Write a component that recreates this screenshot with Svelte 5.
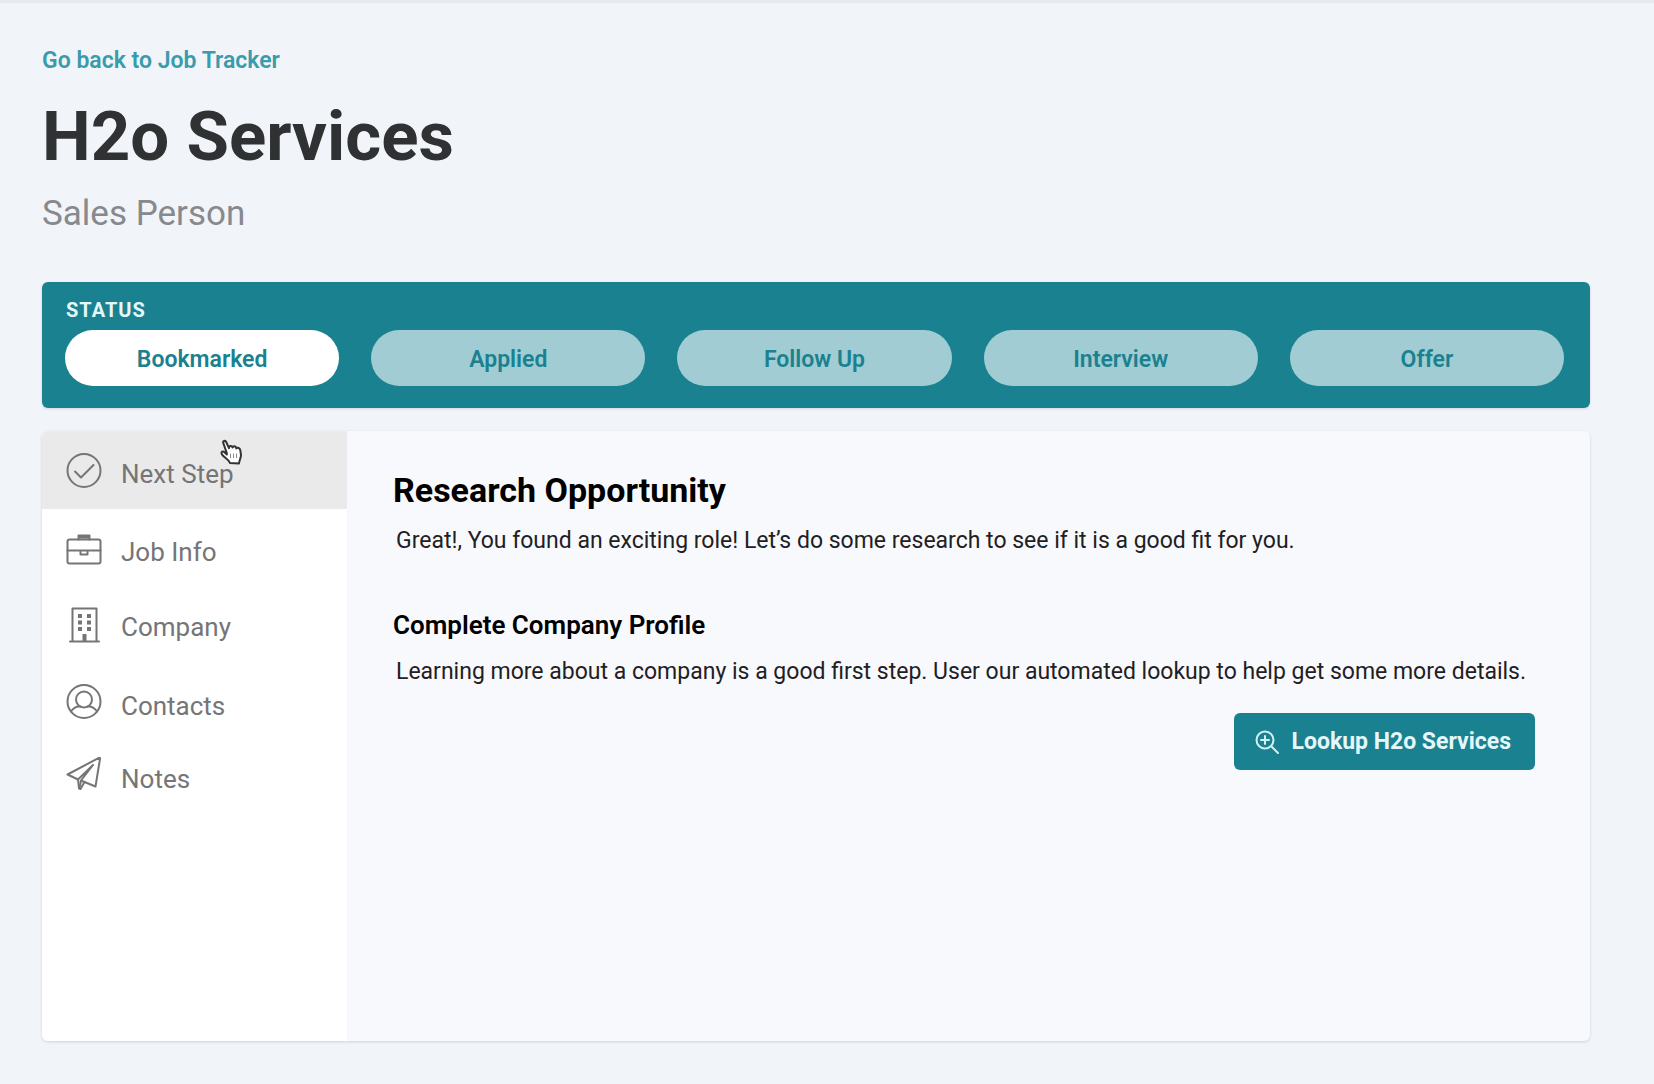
<script>
  const steps = ['Bookmarked', 'Applied', 'Follow Up', 'Interview', 'Offer'];
  const sections = [
    { id: 'next', label: 'Next Step' },
    { id: 'job', label: 'Job Info' },
    { id: 'company', label: 'Company' },
    { id: 'contacts', label: 'Contacts' },
    { id: 'notes', label: 'Notes' }
  ];
  let status = $state('Bookmarked');
  let section = $state('next');
</script>

<div class="page">
  <header>
    <a class="back" href="#tracker">Go back to Job Tracker</a>
    <h1>H2o Services</h1>
    <p class="role">Sales Person</p>
  </header>

  <section class="status" aria-labelledby="status-title">
    <h2 id="status-title">STATUS</h2>
    <div class="steps">
      {#each steps as step}
        <button type="button" class="step" class:current={status === step} aria-pressed={status === step} onclick={() => (status = step)}>{step}</button>
      {/each}
    </div>
  </section>

  <div class="card">
    <nav aria-label="Job sections">
      {#each sections as item}
        <button type="button" class="item" class:active={section === item.id} onclick={() => (section = item.id)}>
          <svg class="icon" viewBox="0 0 36 44" aria-hidden="true">
            {#if item.id === 'next'}
              <circle cx="18" cy="18.5" r="16.5" />
              <path d="M9 19.5l6 6 12.500-12.500" />
            {:else if item.id === 'job'}
              <rect x="1.500" y="9.5" width="33" height="24" rx="2" />
              <path d="M12.500 9.500V5.500h11v4M13 7.500h10M1.500 20.500H14.500M21.500 20.500H34.500M14.500 20.500h7v4h-7z" />
            {:else if item.id === 'company'}
              <path d="M6.500 36V3.500H30.500V36M4 36.500H33" />
              <path class="solid" d="M12 9h4v4h-4zM21 9h4v4h-4zM12 15.500h4v4h-4zM21 15.500h4v4h-4zM12 22h4v4h-4zM21 22h4v4h-4zM16.500 29h4v7h-4z" />
            {:else if item.id === 'contacts'}
              <circle cx="18" cy="17.5" r="16.500" />
              <circle cx="18" cy="15.500" r="8" />
              <path d="M5 27.500C7.500 23.500 11 22 14.500 22.500M21.500 22.500C25 22 28.500 23.500 31 27.500" />
            {:else}
              <path d="M1.500 17.500L33 .8C33.700 .5 34.200 1 34 1.800L29.500 29.500 18.500 25 14.500 32 13 31.500 12 22.500z" />
              <path d="M27 8L12 22.500M27 8L15 23.500 18.500 25M15 23.500L13.500 31" />
            {/if}
          </svg>
          <span>{item.label}</span>
        </button>
      {/each}
      <svg class="pointer" viewBox="0 0 24 26" aria-hidden="true">
        <path d="M7.800 15.500V14L4.300 4.200C3.600 2 6.300 1 7.200 3L10 9.200C10 6.500 13 6.500 13.500 8.500 14.500 6.500 17 7 17.300 9.500 18.500 8 21 9 21.300 11.200L22 16C22 19 20.500 20.500 20 24.500L11 24C10 20.500 6 19 3.800 16.500 1 13.200 3.500 11.500 5.500 13.300z" />
        <path class="lines" d="M11.500 14.500v4.500M14.500 14.500v4.500M17.500 14.500v4.500" />
      </svg>
    </nav>

    <main>
      <h2>Research Opportunity</h2>
      <p>Great!, You found an exciting role! Let’s do some research to see if it is a good fit for you.</p>
      <h3>Complete Company Profile</h3>
      <p>Learning more about a company is a good first step. User our automated lookup to help get some more details.</p>
      <button type="button" class="lookup">
        <svg viewBox="0 0 24 24" aria-hidden="true">
          <circle cx="10" cy="10" r="8.500" />
          <path d="M16.500 16.500L23 23M10 6v8M6 10h8" />
        </svg>
        Lookup H2o Services
      </button>
    </main>
  </div>
</div>

<style>
  :global(body) {
    background: #f1f5f9;
  }
  .page {
    box-sizing: border-box;
    min-height: 100vh;
    border-top: 3px solid #e8e9ec;
    padding: 42px 64px 42px 42px;
    font-family: Roboto, sans-serif;
  }
  h1, h2, h3, p {
    margin: 0;
  }
  button {
    font-family: inherit;
    border: 0;
    cursor: pointer;
  }
  header {
    display: flex;
    flex-direction: column;
    align-items: flex-start;
    margin-bottom: 46px;
  }
  .back {
    color: #3a9bab;
    font-size: 23px;
    line-height: 32px;
    font-weight: 600;
    text-decoration: none;
  }
  h1 {
    margin-top: 16px;
    color: #2f3133;
    font-size: 69px;
    line-height: 88px;
    font-weight: 700;
  }
  .role {
    margin-top: 11px;
    color: #87898d;
    font-size: 35px;
    line-height: 44px;
  }
  .status {
    box-sizing: border-box;
    border-radius: 6px;
    padding: 16px 26px 22px 23px;
    background: #19818f;
    box-shadow: 0 1px 3px #0000001f;
  }
  .status h2 {
    margin-left: 1px;
    color: #e4f8fb;
    font-size: 20px;
    line-height: 24px;
    font-weight: 700;
    letter-spacing: 1px;
  }
  .steps {
    display: grid;
    grid-template-columns: repeat(5, 1fr);
    gap: 32px;
    margin-top: 8px;
  }
  .step {
    height: 56px;
    border-radius: 28px;
    padding: 2px 0 0;
    background: #a1ccd3;
    color: #19818f;
    font-size: 23px;
    font-weight: 600;
  }
  .step.current {
    background: #fff;
  }
  .card {
    display: grid;
    grid-template-columns: 305px 1fr;
    min-height: 610px;
    margin-top: 23px;
    border-radius: 6px;
    overflow: hidden;
    background: #f8f9fc;
    box-shadow: 0 1px 3px #00000024;
  }
  nav {
    position: relative;
    display: grid;
    grid-template-rows: 78px 75px 79px 73px 73px;
    align-content: start;
    background: #fff;
  }
  .item {
    display: flex;
    align-items: flex-start;
    gap: 19px;
    padding: 21px 24px 0;
    background: none;
    color: #757577;
    font-size: 26px;
    line-height: 44px;
    text-align: left;
  }
  .item.active {
    background: #eaeaea;
  }
  .icon {
    flex: none;
    width: 36px;
    height: 44px;
    fill: none;
    stroke: #757577;
    stroke-width: 2;
    stroke-linejoin: round;
    stroke-linecap: round;
  }
  .solid {
    fill: #757577;
    stroke: none;
  }
  .pointer {
    position: absolute;
    top: 8px;
    left: 177px;
    width: 24px;
    height: 26px;
    fill: #fff;
    stroke: #333;
    stroke-width: 2;
    stroke-linejoin: round;
    pointer-events: none;
  }
  .lines {
    stroke: #888;
    stroke-width: 1;
  }
  main {
    display: flex;
    flex-direction: column;
    padding: 39px 55px 40px 46px;
    color: #000;
  }
  main h2 {
    font-size: 34px;
    line-height: 40px;
    font-weight: 700;
  }
  main h3 {
    margin-top: 52px;
    font-size: 26px;
    line-height: 32px;
    font-weight: 600;
  }
  main p {
    margin-top: 15px;
    padding-left: 3px;
    color: #1f2023;
    font-size: 23px;
    line-height: 32px;
  }
  .lookup {
    display: flex;
    align-items: center;
    align-self: flex-end;
    gap: 12px;
    height: 57px;
    margin-top: 25px;
    border-radius: 6px;
    padding: 0 24px 0 21px;
    background: #19818f;
    color: #e4f8fb;
    font-size: 23px;
    font-weight: 700;
  }
  .lookup svg {
    width: 24px;
    height: 24px;
    fill: none;
    stroke: #d0f1f5;
    stroke-width: 2;
    stroke-linecap: round;
  }
</style>
